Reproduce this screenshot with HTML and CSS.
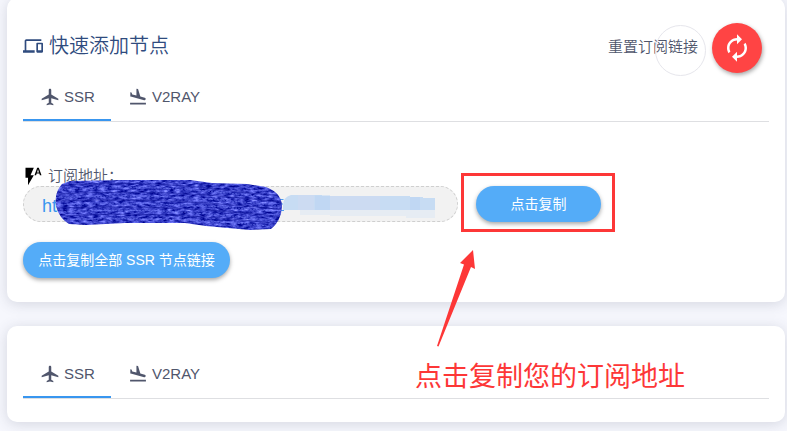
FILE: index.html
```html
<!DOCTYPE html>
<html lang="zh-CN">
<head>
<meta charset="utf-8">
<title>快速添加节点</title>
<link rel="stylesheet" href="styles.css">
</head>
<body>
<svg width="0" height="0" class="defs" aria-hidden="true">
  <symbol id="flight" viewBox="0 0 24 24"><path d="M22 16v-2l-8.500-5V3.500c0-.83-.67-1.500-1.500-1.500s-1.500.67-1.500 1.500V9L2 14v2l8.500-2.500V19L8 20.500V22l4-1 4 1v-1.500L13.500 19v-5.500z"/></symbol>
  <symbol id="land" viewBox="0 0 24 24"><path d="M2.500 19h19v2h-19zm7.180-5.730l4.350 1.160 5.310 1.420c.8.21 1.620-.26 1.840-1.060.21-.8-.26-1.620-1.060-1.840l-5.310-1.420-2.760-9.020L10.120 2v8.280L5.150 8.950l-.93-2.320-1.450-.39v5.170l1.600.43z"/></symbol>
</svg>
<main>
  <section class="card first">
    <header class="head">
      <h1 class="title"><svg class="icon" viewBox="0 0 24 24"><path d="M4 6h18V4H4c-1.100 0-2 .9-2 2v11H0v3h14v-3H4zm19 2h-6c-.55 0-1 .45-1 1v10c0 .55.45 1 1 1h6c.55 0 1-.45 1-1V9c0-.55-.45-1-1-1zm-1 9h-4v-7h4z"/></svg>快速添加节点</h1>
      <div class="reset"><span class="reset-label">重置订阅链接<i class="ring"></i></span>
        <button class="fab"><svg viewBox="0 0 24 24"><path d="M12 6v3l4-4-4-4v3c-4.420 0-8 3.580-8 8 0 1.570.46 3.030 1.240 4.260L6.700 14.800c-.45-.83-.7-1.790-.7-2.800 0-3.310 2.690-6 6-6zm6.760 1.740L17.300 9.200c.44.84.7 1.790.7 2.800 0 3.310-2.690 6-6 6v-3l-4 4 4 4v-3c4.420 0 8-3.580 8-8 0-1.570-.46-3.030-1.240-4.260z"/></svg></button>
      </div>
    </header>
    <nav class="tabs"><a class="tab active"><svg class="icon"><use href="#flight"/></svg>SSR</a><a class="tab"><svg class="icon"><use href="#land"/></svg>V2RAY</a></nav>
    <div class="label"><svg class="icon bolt" viewBox="0 0 24 24"><path d="M3 2v12h3v9l7-12H9l4-9zm16 0h-2l-3.200 9h1.900l.7-2h3.200l.7 2h1.900zm-2.150 5.650L18 4l1.150 3.650z"/></svg>订阅地址：</div>
    <div class="row"><div class="url">ht</div><button class="btn copy">点击复制</button></div>
    <button class="btn all">点击复制全部 SSR 节点链接</button>
  </section>
  <section class="card second">
    <nav class="tabs"><a class="tab active"><svg class="icon"><use href="#flight"/></svg>SSR</a><a class="tab"><svg class="icon"><use href="#land"/></svg>V2RAY</a></nav>
  </section>
</main>
<svg class="marks" width="787" height="431" viewBox="0 0 787 431">
  <defs>
    <filter id="brush" x="0" y="0" width="100%" height="100%" color-interpolation-filters="sRGB">
      <feTurbulence type="fractalNoise" baseFrequency="0.16 0.42" numOctaves="3" seed="4"/>
      <feColorMatrix values="0.9 0 0 0 -.22  0.9 0 0 0 -.19  0.8 0 0 0 .39  0 0 0 0 1"/>
      <feComposite in2="SourceGraphic" operator="in"/>
    </filter>
    <clipPath id="stroke"><path d="M70 181L122 180 190 180 212 183 247 184 266 187Q282 193 282 207 281 221 271 229L250 230 206 226 185 223 125 223 86 225 69 224Q59 218 56 206 54 193 62 184Z"/></clipPath>
  </defs>
  <g fill="none" stroke="#4c9fee" stroke-width="1"><path d="M280 199.500h3.500M281 204h2M280 210.500h4"/></g>
  <path fill="#c7dcf3" d="M283 206Q283 197 291 195H322V196H410V197H423V198H435V210H283Z"/>
  <path fill="#c0d7f3" d="M315 195.500h15V210h-15zM410 197h10v13h-10z"/>
  <path fill="#ccdbf2" d="M330 196h50v14h-50zM298 195h16v15h-16z"/>
  <path fill="#e6ecf3" d="M300 210h135v8h-29v-2h-76v-1h-30z"/>
  <g clip-path="url(#stroke)">
    <path fill="#3037c2" filter="url(#brush)" d="M50 175H290V235H50Z"/>
    <g fill="none" stroke="#1a22a4" stroke-width="1" opacity=".6"><path d="M55 186Q140 180 206 188T284 195M55 194Q140 190 206 195T284 203M55 201Q140 198 206 203T284 210M55 208Q140 205 206 210T284 217M55 216Q140 212 206 217T284 225"/></g>
    <g fill="none" stroke="#6b78ee" stroke-width="1" stroke-dasharray="2 1" opacity=".6"><path d="M55 190Q140 185 206 191T284 199M55 198Q140 194 206 199T284 207M55 205Q140 202 206 206T284 214M55 212Q140 208 206 214T284 221M55 220Q140 217 206 221T284 229"/></g>
  </g>
  <rect x="462.500" y="174.500" width="151" height="56" fill="none" stroke="#fd3737" stroke-width="3"/>
  <path fill="#fd3737" d="M473 250L475 269 471 267 438.500 346.500 437 346 464 264.500 460 263Z"/>
</svg>
<div class="note">点击复制您的订阅地址</div>
</body>
</html>
```
FILE: styles.css
```css
* { box-sizing: border-box; }
body {
  margin: 0;
  height: 431px;
  overflow: hidden;
  position: relative;
  background: #f6f7fd;
  color: #50566c;
  font: 350 15px/20px "Liberation Sans", "Noto Sans CJK SC", sans-serif;
}
main { display: flex; flex-direction: column; gap: 24px; padding: 0 2px 0 7px; margin-top: -2px; }
.defs { position: absolute; }
.card {
  background: #fff;
  border-radius: 10px;
  padding: 0 16px;
  box-shadow: 0 2px 14px rgba(60, 64, 90, .18);
}
.first { height: 304px; padding-top: 25px; }
.second { height: 96px; padding-top: 24px; }
.icon { width: 20px; height: 20px; fill: currentColor; flex: none; }
.head { display: flex; justify-content: space-between; height: 50px; }
.title {
  display: flex;
  align-items: center;
  gap: 6px;
  height: 46px;
  margin: 0;
  color: #2f4b7e;
  font-size: 20px;
  font-weight: 350;
}
.reset { display: flex; gap: 14px; margin-right: 7px; }
.reset-label { position: relative; height: 46px; line-height: 47px; }
.ring {
  position: absolute;
  left: 47px;
  top: 2px;
  width: 51px;
  height: 51px;
  border: 1px solid #e6e6ec;
  border-radius: 50%;
}
button { border: 0; padding: 0; font-family: inherit; color: #fff; }
.fab {
  width: 50px;
  height: 50px;
  display: grid;
  place-items: center;
  border-radius: 50%;
  background: #ff4444;
  box-shadow: 1px 2px 4px rgba(0, 0, 0, .35);
}
.fab svg { width: 30px; height: 30px; fill: #fff; }
.tabs { display: flex; height: 49px; border-bottom: 1px solid #dedfe2; }
.tab { display: flex; align-items: center; gap: 4px; height: 48px; padding: 0 16px 0 17px; }
.tab.active { width: 88px; border-bottom: 2px solid #3996ef; padding-top: 2px; }
.label { display: flex; align-items: center; gap: 5px; height: 20px; margin-top: 44px; }
.bolt { fill: #000; }
.row { display: flex; gap: 18px; }
.url {
  width: 435px;
  height: 36px;
  padding-left: 18px;
  border: 1px dashed #cfcfcf;
  border-radius: 18px;
  background: #f2f2f2;
  color: #3996ef;
  font-size: 18px;
  line-height: 38px;
}
.btn {
  display: block;
  height: 36px;
  border-radius: 18px;
  background: #54acf8;
  font-size: 14px;
  padding-bottom: 2px;
  box-shadow: 0 2px 4px rgba(0, 0, 0, .35);
}
.copy { width: 125px; }
.all { width: 207px; margin-top: 20px; }
.marks { position: absolute; left: 0; top: 0; }
.note {
  position: absolute;
  left: 415px;
  top: 357px;
  color: #fd3737;
  font-size: 27px;
  font-weight: 400;
  line-height: 40px;
  white-space: nowrap;
}
```
